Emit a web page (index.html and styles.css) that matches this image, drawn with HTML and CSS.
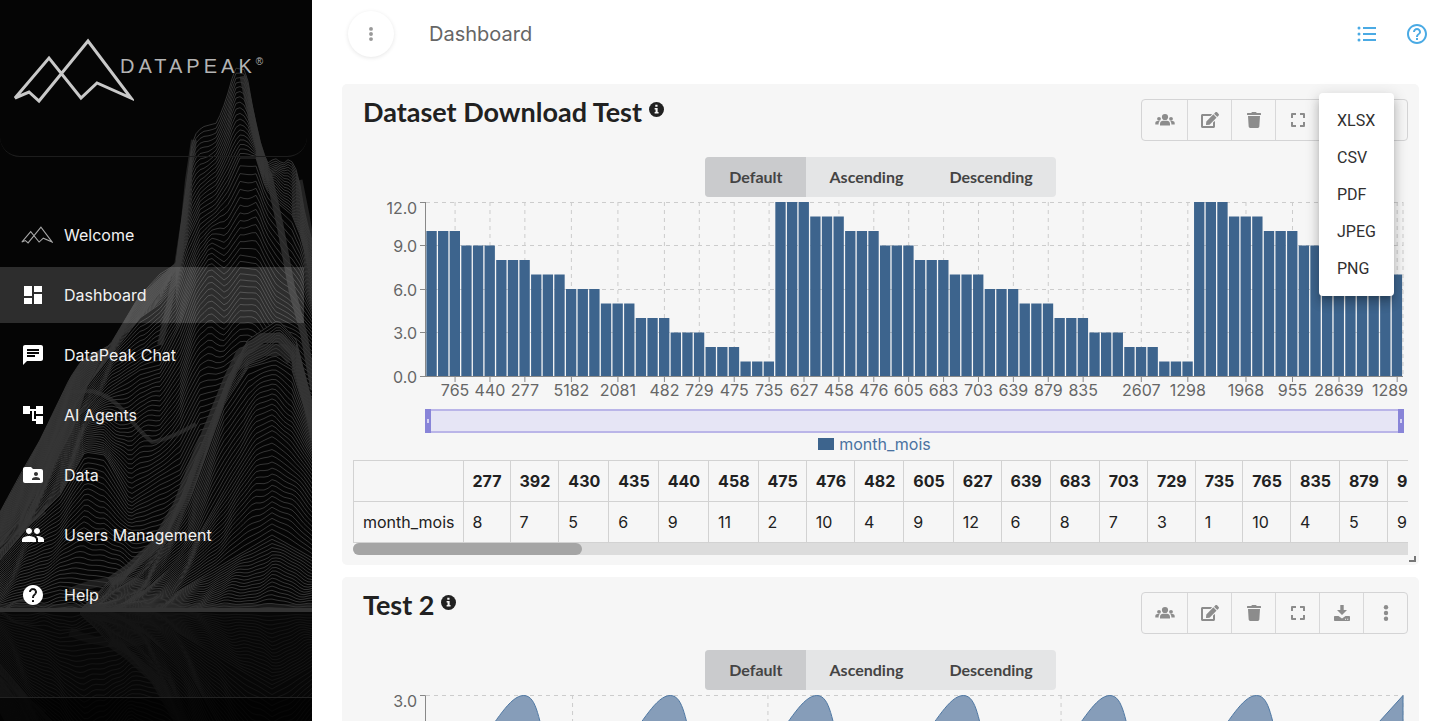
FILE: index.html
```html
<!DOCTYPE html>
<html lang="en">
<head>
<meta charset="utf-8">
<title>Dashboard</title>
<link rel="stylesheet" href="styles.css">
</head>
<body>
<svg class="defs" aria-hidden="true">
  <symbol id="i-info" viewBox="0 0 16 16"><circle cx="8" cy="8" r="8" fill="currentColor"/><path fill="#f6f6f6" d="M6.700 3h2.400v2.100H6.700zM6 6.400h3.200v4.200h1v1.600H6v-1.600h1V8H6z"/></symbol>
  <symbol id="i-users" viewBox="0 0 20 16"><g fill="currentColor"><circle cx="10" cy="5" r="3.100"/><circle cx="4" cy="6.800" r="1.900"/><circle cx="16" cy="6.800" r="1.900"/><path d="M5 13.500v-1.700C5 9.800 6.500 8.800 8 8.800h4c1.500 0 3 1 3 3v1.700zM.3 12.500v-1.300c0-1.200.9-2.100 2.100-2.100h2.300c-.8.800-1.100 1.800-1.100 3.400zM19.700 12.500v-1.300c0-1.200-.9-2.100-2.100-2.100h-2.300c.8.800 1.100 1.800 1.100 3.400z"/></g></symbol>
  <symbol id="i-edit" viewBox="0 0 576 512"><path fill="currentColor" d="M402.600 83.200l90.200 90.200c3.800 3.800 3.800 10 0 13.800L274.400 405.600l-92.800 10.300c-12.400 1.400-22.900-9.100-21.500-21.500l10.300-92.800L388.800 83.200c3.800-3.800 10-3.800 13.800 0zm162-22.900l-48.800-48.800c-15.200-15.200-39.900-15.200-55.200 0l-35.400 35.400c-3.800 3.800-3.800 10 0 13.800l90.200 90.200c3.800 3.800 10 3.800 13.800 0l35.400-35.400c15.200-15.300 15.200-40 0-55.200zM384 346.200V448H64V128h229.800c3.200 0 6.200-1.300 8.500-3.500l40-40c7.600-7.600 2.200-20.500-8.500-20.500H48C21.500 64 0 85.500 0 112v352c0 26.500 21.500 48 48 48h352c26.500 0 48-21.500 48-48V306.200c0-10.700-12.900-16-20.500-8.500l-40 40c-2.200 2.300-3.500 5.300-3.500 8.500z"/></symbol>
  <symbol id="i-trash" viewBox="0 0 448 512"><path fill="currentColor" d="M432 32H312l-9.400-18.700A24 24 0 0 0 281.100 0H166.800a23.720 23.720 0 0 0-21.400 13.300L136 32H16A16 16 0 0 0 0 48v32a16 16 0 0 0 16 16h416a16 16 0 0 0 16-16V48a16 16 0 0 0-16-16zM53.200 467a48 48 0 0 0 47.900 45h245.800a48 48 0 0 0 47.900-45L416 128H32z"/></symbol>
  <symbol id="i-expand" viewBox="0 0 16 16"><path fill="none" stroke="currentColor" stroke-width="2" stroke-linejoin="round" d="M2 6V2h4M10 2h4v4M14 10v4h-4M6 14H2v-4"/></symbol>
  <symbol id="i-download" viewBox="0 0 16 16"><path fill="currentColor" d="M6.300 0h3.400v5h3.300L8 10 3 5h3.300zM.8 11h3.700L8 13.400 11.500 11h3.700c.5 0 .8.300.8.800v3.400c0 .5-.3.800-.8.800H.8c-.5 0-.8-.3-.8-.8v-3.400c0-.5.3-.8.800-.8zM11 14.800h1v-1h-1zm2.200 0h1v-1h-1z"/></symbol>
  <symbol id="i-dots" viewBox="0 0 16 16"><g fill="currentColor"><circle cx="8" cy="2.200" r="2.200"/><circle cx="8" cy="8" r="2.200"/><circle cx="8" cy="13.800" r="2.200"/></g></symbol>
</svg>

<div class="app">
  <aside class="sidebar">
    <svg class="scenery" id="scenery" aria-hidden="true"></svg>
    <div class="brand">
      <svg class="brand-mark" viewBox="0 0 122 66" aria-hidden="true"><path d="M3 60 37 20 69 60 85 45 119 60 76 3 27 63 17 54z"/></svg>
      <span class="brand-name">DATAPEAK<sup>®</sup></span>
    </div>
    <nav class="nav">
      <a href="#"><svg class="peak" viewBox="0 0 122 66"><path d="M3 60 37 20 69 60 85 45 119 60 76 3 27 63 17 54z"/></svg>Welcome</a>
      <a href="#" class="active" aria-current="page"><svg viewBox="0 0 24 24"><path d="M3 13h8V3H3v10zm0 8h8v-6H3v6zm10 0h8V11h-8v10zm0-18v6h8V3h-8z"/></svg>Dashboard</a>
      <a href="#"><svg viewBox="0 0 24 24"><path d="M20 2H4c-1.100 0-1.990.9-1.990 2L2 22l4-4h14c1.100 0 2-.9 2-2V4c0-1.100-.9-2-2-2zM6 9h12v2H6V9zm8 5H6v-2h8v2zm4-6H6V6h12v2z"/></svg>DataPeak Chat</a>
      <a href="#"><svg viewBox="0 0 24 24"><path d="M22 11V3h-7v3H9V3H2v8h7V8h2v10h4v3h7v-8h-7v3h-2V8h2v3h7z"/></svg>AI Agents</a>
      <a href="#"><svg viewBox="0 0 24 24"><path d="M20 6h-8l-2-2H4c-1.100 0-1.990.9-1.990 2L2 18c0 1.100.9 2 2 2h16c1.100 0 2-.9 2-2V8c0-1.100-.9-2-2-2zm-5 3c1.100 0 2 .9 2 2s-.9 2-2 2-2-.9-2-2 .9-2 2-2zm4 8h-8v-1c0-1.330 2.670-2 4-2s4 .67 4 2v1z"/></svg>Data</a>
      <a href="#"><svg viewBox="0 0 24 24"><path d="M16 11c1.660 0 2.990-1.340 2.990-3S17.660 5 16 5c-1.660 0-3 1.340-3 3s1.340 3 3 3zm-8 0c1.660 0 2.990-1.340 2.990-3S9.660 5 8 5C6.340 5 5 6.340 5 8s1.340 3 3 3zm0 2c-2.330 0-7 1.170-7 3.500V19h14v-2.500c0-2.330-4.670-3.500-7-3.500zm8 0c-.29 0-.62.02-.97.05 1.160.84 1.970 1.970 1.970 3.450V19h6v-2.500c0-2.330-4.670-3.500-7-3.500z"/></svg>Users Management</a>
      <a href="#"><svg viewBox="0 0 24 24"><path d="M12 2C6.480 2 2 6.480 2 12s4.480 10 10 10 10-4.480 10-10S17.520 2 12 2zm1 17h-2v-2h2v2zm2.070-7.750l-.9.920C13.450 12.900 13 13.500 13 15h-2v-.5c0-1.100.45-2.100 1.170-2.830l1.240-1.260c.37-.36.59-.86.59-1.410 0-1.100-.9-2-2-2s-2 .9-2 2H8c0-2.210 1.790-4 4-4s4 1.790 4 4c0 .88-.36 1.680-.93 2.250z"/></svg>Help</a>
    </nav>
    <div class="sidebar-foot"></div>
  </aside>

  <main class="main">
    <header class="topbar">
      <button class="round" aria-label="Toggle menu"><svg viewBox="0 0 16 16"><use href="#i-dots"/></svg></button>
      <h1>Dashboard</h1>
      <button class="plain" aria-label="List"><svg viewBox="0 0 20 16"><path d="M6 2h13M6 8h13M6 14h13" stroke="currentColor" stroke-width="2"/><g fill="currentColor"><circle cx="2" cy="2" r="1.500"/><circle cx="2" cy="8" r="1.500"/><circle cx="2" cy="14" r="1.500"/></g></svg></button>
      <button class="plain" aria-label="Help"><svg viewBox="2 2 20 20"><path fill="currentColor" d="M11 18h2v-2h-2v2zm1-16C6.480 2 2 6.480 2 12s4.480 10 10 10 10-4.480 10-10S17.520 2 12 2zm0 18c-4.410 0-8-3.590-8-8s3.590-8 8-8 8 3.590 8 8-3.590 8-8 8zm0-14c-2.210 0-4 1.790-4 4h2c0-1.100.9-2 2-2s2 .9 2 2c0 2-3 1.750-3 5h2c0-2.250 3-2.500 3-5 0-2.210-1.790-4-4-4z"/></svg></button>
    </header>

    <section class="card">
      <div class="card-head">
        <h2>Dataset Download Test <svg class="info"><use href="#i-info"/></svg></h2>
        <div class="toolbar">
          <button aria-label="Share"><svg class="wide"><use href="#i-users"/></svg></button>
          <button aria-label="Edit"><svg class="wide"><use href="#i-edit"/></svg></button>
          <button aria-label="Delete"><svg><use href="#i-trash"/></svg></button>
          <button aria-label="Full screen"><svg><use href="#i-expand"/></svg></button>
          <button aria-label="Download"><svg><use href="#i-download"/></svg></button>
          <button aria-label="More"><svg><use href="#i-dots"/></svg></button>
          <div class="menu" role="menu">
            <button role="menuitem">XLSX</button>
            <button role="menuitem">CSV</button>
            <button role="menuitem">PDF</button>
            <button role="menuitem">JPEG</button>
            <button role="menuitem">PNG</button>
          </div>
        </div>
      </div>
      <div class="sort"><button class="on">Default</button><button>Ascending</button><button>Descending</button></div>
      <svg class="chart" id="bars" role="img" aria-label="Bar chart of month_mois"></svg>
      <div class="legend"><span class="swatch"></span>month_mois</div>
      <div class="table-wrap">
        <table><thead><tr id="head"><td></td></tr></thead><tbody><tr id="vals"><th scope="row">month_mois</th></tr></tbody></table>
      </div>
      <div class="scroll"><div class="thumb"></div></div>
      <span class="grip"></span>
    </section>

    <section class="card">
      <div class="card-head">
        <h2>Test 2 <svg class="info"><use href="#i-info"/></svg></h2>
        <div class="toolbar">
          <button aria-label="Share"><svg class="wide"><use href="#i-users"/></svg></button>
          <button aria-label="Edit"><svg class="wide"><use href="#i-edit"/></svg></button>
          <button aria-label="Delete"><svg><use href="#i-trash"/></svg></button>
          <button aria-label="Full screen"><svg><use href="#i-expand"/></svg></button>
          <button aria-label="Download"><svg><use href="#i-download"/></svg></button>
          <button aria-label="More"><svg><use href="#i-dots"/></svg></button>
        </div>
      </div>
      <div class="sort"><button class="on">Default</button><button>Ascending</button><button>Descending</button></div>
      <svg class="chart" id="area" role="img" aria-label="Area chart"></svg>
    </section>
  </main>
</div>
<script src="app.js"></script>
</body>
</html>
```
FILE: styles.css
```css
* { box-sizing: border-box; }
body { margin: 0; background: #fff; font-family: Inter, "Liberation Sans", sans-serif; font-size: 16px; color: #212121; }
button { font: inherit; color: inherit; border: 0; background: none; padding: 0; cursor: pointer; }
.defs { position: absolute; width: 0; height: 0; }
.app { display: flex; height: 100vh; overflow: hidden; }

.sidebar { position: relative; flex: 0 0 312px; display: flex; flex-direction: column; background: #050505; color: #fff; overflow: hidden; }
.scenery { position: absolute; top: 0; left: 0; width: 100%; height: 100%; }
.brand { position: relative; display: flex; align-items: flex-start; height: 157px; margin-right: 5px; padding: 38px 0 0 12px; border-bottom: 1px solid #1d1d1d; border-radius: 0 0 20px 20px; }
.brand-mark { width: 122px; height: 66px; flex: none; margin-right: -14px; }
.brand-mark path { fill: none; stroke: #c9c9c9; stroke-width: 3; }
.brand-name { padding-top: 16px; font-family: "Liberation Sans", Arial, sans-serif; font-size: 20px; line-height: 24px; letter-spacing: 4px; color: #b4b4b4; white-space: nowrap; }
.brand-name sup { font-size: 10px; line-height: 0; letter-spacing: 0; }
.nav { position: relative; display: flex; flex-direction: column; gap: 4px; padding-top: 50px; margin-right: 8px; }
.nav a { display: flex; align-items: center; gap: 19px; padding: 16px 21px; line-height: 24px; color: #f2f2f2; text-decoration: none; }
.nav a.active { background: rgba(255, 255, 255, .16); }
.nav svg { width: 24px; height: 24px; fill: #fff; }
.nav svg.peak { width: 32px; height: 18px; margin-right: -8px; fill: none; stroke: #a8a8a8; stroke-width: 4; }
.sidebar-foot { position: relative; height: 24px; margin-top: auto; border-top: 1px solid #222; background: rgba(0, 0, 0, .6); }

.main { flex: 1; min-width: 0; padding: 0 20px 0 30px; }
.topbar { display: flex; align-items: center; height: 84px; padding: 0 0 16px 6px; margin-right: -8px; color: #4aaae4; }
.round { width: 46px; height: 46px; border-radius: 50%; background: #fff; color: #999; box-shadow: 0 1px 4px rgba(0, 0, 0, .1); display: grid; place-items: center; }
.round svg { width: 14px; height: 14px; }
h1 { flex: 1; margin: 0 0 0 35px; font-size: 20px; font-weight: 400; line-height: 28px; color: #666; }
.plain { display: flex; margin-left: 30px; }
.plain svg { width: 20px; height: 20px; }

.card { position: relative; background: #f6f6f6; border-radius: 5px; padding: 15px 11px 10px; margin-bottom: 12px; }
.card-head { display: flex; justify-content: space-between; align-items: flex-start; height: 58px; }
h2 { margin: 0 0 0 10px; font-family: Lato, sans-serif; font-size: 27px; font-weight: 700; line-height: 26px; white-space: nowrap; }
.info { width: 15px; height: 15px; vertical-align: 5px; }
.toolbar { position: relative; display: flex; height: 42px; border: 1px solid #d4d4d5; border-radius: 4px; color: #8c8c8c; }
.toolbar > button { width: 44px; display: grid; place-items: center; }
.toolbar > button + button { border-left: 1px solid #d8d8d9; }
.toolbar > button:first-child { width: 45px; }
.toolbar svg { width: 16px; height: 16px; }
.toolbar svg.wide { width: 20px; }
.menu { position: absolute; top: -7px; right: 13px; width: 75px; padding: 9px 0; border-radius: 4px; background: #fff; color: #303030; box-shadow: 0 5px 5px -3px rgba(0, 0, 0, .2), 0 8px 10px 1px rgba(0, 0, 0, .14), 0 3px 14px 2px rgba(0, 0, 0, .12); }
.menu button { display: block; width: 100%; padding: 0 18px; font-family: Roboto, sans-serif; font-size: 16px; line-height: 37px; text-align: left; }
.sort { display: flex; width: max-content; margin: 0 auto; border-radius: 4px; overflow: hidden; background: #e4e5e6; color: #444; }
.sort button { padding: 0 23px; font-family: Lato, sans-serif; font-weight: 700; font-size: 16px; line-height: 40px; }
.sort .on { background: #cacbcd; padding: 0 24px; }

.chart { display: block; width: 100%; height: 236px; overflow: visible; }
.chart text { font-family: Inter, sans-serif; font-size: 16px; fill: #666; }
.grid { stroke: #ccc; stroke-dasharray: 4 4; }
.axis { stroke: #888; stroke-width: 1; fill: none; }
.bar { fill: #3d648d; }
.brush { fill: #e6e5f5; stroke: #bab5e8; stroke-width: 2; }
.handle { fill: #8884d8; }
.nub { fill: #d5d3f3; }
.wave { fill: #869db9; stroke: #4f78a3; }
.legend { display: flex; justify-content: center; align-items: center; gap: 5px; margin-right: 12px; line-height: 22px; color: #4a72a0; }
.swatch { width: 16px; height: 12px; background: #3d648d; }

.table-wrap { margin-top: 5px; overflow: hidden; }
table { border-collapse: collapse; white-space: nowrap; }
th, td { height: 41px; padding: 0 8px 0 9px; border: 1px solid #d2d2d2; text-align: left; font-weight: 400; }
thead th { font-weight: 700; }
.scroll { height: 12px; background: #dcdcdc; border-radius: 6px 0 0 6px; }
.thumb { width: 229px; height: 12px; border-radius: 6px; background: #a5a5a5; }
.grip { position: absolute; right: 3px; bottom: 3px; width: 7px; height: 6px; border: solid #777; border-width: 0 2px 2px 0; }
```
FILE: app.js
```js
const el = (name, attrs, text) => {
  const node = document.createElementNS('http://www.w3.org/2000/svg', name);
  for (const key in attrs) node.setAttribute(key, attrs[key]);
  if (text !== undefined) node.textContent = text;
  return node;
};

const columns = [[277, 8], [392, 7], [430, 5], [435, 6], [440, 9], [458, 11], [475, 2], [476, 10], [482, 4], [605, 9], [627, 12], [639, 6], [683, 8], [703, 7], [729, 3], [735, 1], [765, 10], [835, 4], [879, 5], [955, 9]];
for (const [id, value] of columns) {
  const th = document.createElement('th');
  th.scope = 'col';
  th.textContent = id;
  document.getElementById('head').append(th);
  const td = document.createElement('td');
  td.textContent = value;
  document.getElementById('vals').append(td);
}

const LEFT = 73, TOP = 5;

function drawBars() {
  const svg = document.getElementById('bars');
  const right = svg.clientWidth - 5, span = right - LEFT, height = 174;
  svg.replaceChildren();
  const add = (...a) => svg.append(el(...a));
  const values = [];
  const run = (from, to) => { for (let v = from; v >= to; v--) values.push(v, v, v); };
  run(10, 1); run(12, 1); run(12, 7);
  const step = span / values.length;
  const ticks = { 2: 765, 5: 440, 8: 277, 12: 5182, 16: 2081, 20: 482, 23: 729, 26: 475, 29: 735, 32: 627, 35: 458, 38: 476, 41: 605, 44: 683, 47: 703, 50: 639, 53: 879, 56: 835, 61: 2607, 65: 1298, 70: 1968, 74: 955, 78: 28639, 83: 1289 };
  const bottom = TOP + height;
  for (let v = 0; v <= 12; v += 3) {
    const y = Math.floor(bottom - v * height / 12) + 0.5;
    add('line', { class: 'grid', x1: LEFT, x2: right, y1: y, y2: y });
    add('line', { class: 'axis', x1: LEFT - 6, x2: LEFT, y1: y, y2: y });
    add('text', { x: LEFT - 9, y: v === 12 ? y + 11 : y + 6, 'text-anchor': 'end' }, v.toFixed(1));
  }
  for (const i in ticks) {
    const x = LEFT + (+i + 0.5) * step;
    add('line', { class: 'grid', x1: x, x2: x, y1: TOP, y2: bottom });
    add('line', { class: 'axis', x1: x, x2: x, y1: bottom, y2: bottom + 6 });
    add('text', { x: Math.min(x, right - 13), y: bottom + 20, 'text-anchor': 'middle' }, ticks[i]);
  }
  add('line', { class: 'grid', x1: right, x2: right, y1: TOP, y2: bottom });
  values.forEach((v, i) => add('rect', { class: 'bar', x: LEFT + i * step + 0.4, y: bottom - v * height / 12, width: step - 1.300, height: v * height / 12 }));
  add('path', { class: 'axis', d: `M${LEFT - 0.5} ${TOP}V${bottom + 0.5}H${right}` });
  add('rect', { class: 'brush', x: LEFT, y: 213, width: span, height: 22 });
  for (const x of [LEFT - 1, right - 5]) {
    add('rect', { class: 'handle', x, y: 212, width: 6, height: 24 });
    add('rect', { class: 'nub', x: x + 2, y: 222, width: 2, height: 4 });
  }
}

function drawArea() {
  const svg = document.getElementById('area');
  const right = svg.clientWidth - 5, span = right - LEFT, period = span * 0.15;
  svg.replaceChildren();
  const add = (...a) => svg.append(el(...a));
  add('line', { class: 'grid', x1: LEFT, x2: right, y1: 5.5, y2: 5.5 });
  for (const f of [0.15, 0.35, 0.65, 1]) add('line', { class: 'grid', x1: LEFT + f * span, x2: LEFT + f * span, y1: 5, y2: 200 });
  add('path', { class: 'axis', d: `M${LEFT - 6} 5.5H${LEFT - 0.5}V200` });
  add('text', { x: LEFT - 9, y: 17, 'text-anchor': 'end' }, '3.0');
  for (let k = 0; k < 6; k++) {
    const x = LEFT + span * 0.1 + k * period;
    add('path', { class: 'wave', d: `M${x - 45} 54C${x - 28} 33 ${x - 14} 5.500 ${x} 5.500S${x + 15} 33 ${x + 24} 60Z` });
  }
  add('path', { class: 'wave', d: `M${right} 5.500L${right - 24} 32L${right - 40} 54H${right}Z` });
}

/* Each key is a ridge profile; the contours between two keys are blended. */
function drawScenery() {
  const svg = document.getElementById('scenery');
  const sample = (pts, x) => {
    let i = 1;
    while (i < pts.length - 1 && pts[i][0] < x) i++;
    const [a, b] = [pts[i - 1], pts[i]];
    return a[1] + (b[1] - a[1]) * (x - a[0]) / (b[0] - a[0]);
  };
  const range = (keys, counts, group) => {
    const from = keys[0][0][0];
    keys.slice(1).forEach((next, k) => {
      for (let n = 0; n < counts[k]; n++) {
        const t = n / counts[k];
        let d = '';
        for (let x = from; x <= 316; x += 4) {
          const base = sample(keys[k], x) * (1 - t) + sample(next, x) * t;
          const wave = (Math.sin(x / 8 + k * 2 + n / 7) * 3 + Math.sin(x / 3.300 + n / 3)) * Math.sin(Math.PI * t);
          d += (d ? 'L' : 'M') + x + ' ' + Math.min(612, base + wave).toFixed(1);
        }
        group.append(el('path', { d: d + 'L320 640L' + (from - 4) + ' 640', fill: '#050505', stroke: '#3b3b3b', 'stroke-width': 0.9 }));
      }
    });
  };
  const slope = (group, d, width, opacity) => group.append(el('path', { d, fill: 'none', stroke: '#363636', 'stroke-width': width, 'stroke-linejoin': 'round', opacity }));
  const back = [
    [[0, 512], [20, 475], [40, 440], [70, 378], [82, 360], [110, 345], [138, 298], [160, 274], [176, 264], [183, 210], [193, 137], [202, 127], [217, 123], [226, 100], [235, 68], [246, 70], [254, 115], [262, 150], [268, 163], [275, 158], [283, 164], [290, 158], [298, 173], [305, 215], [316, 255]],
    [[0, 540], [20, 520], [50, 450], [78, 398], [115, 350], [140, 318], [160, 304], [176, 285], [186, 244], [200, 214], [215, 205], [228, 185], [240, 158], [256, 158], [266, 190], [280, 205], [292, 215], [302, 240], [316, 310]],
    [[0, 550], [20, 530], [50, 470], [80, 415], [110, 390], [140, 370], [160, 365], [180, 325], [195, 285], [210, 262], [225, 275], [240, 255], [258, 258], [275, 290], [290, 300], [316, 330]],
    [[0, 560], [30, 525], [60, 495], [85, 452], [105, 455], [130, 500], [160, 480], [180, 470], [200, 430], [240, 420], [316, 420]],
    [[0, 605], [60, 590], [110, 600], [170, 600], [316, 600]],
    [[0, 612], [316, 612]]
  ];
  const front = [
    [[80, 612], [110, 580], [130, 568], [155, 540], [180, 500], [196, 458], [210, 425], [228, 378], [248, 340], [278, 320], [296, 340], [316, 420]],
    [[80, 612], [145, 572], [170, 540], [190, 500], [208, 450], [224, 405], [248, 368], [275, 360], [292, 370], [316, 445]],
    [[80, 612], [145, 590], [190, 550], [230, 480], [255, 440], [273, 430], [290, 445], [316, 480]],
    [[80, 612], [170, 596], [230, 560], [272, 535], [316, 560]],
    [[80, 612], [316, 612]]
  ];
  svg.append(el('clipPath', { id: 'shore' }));
  svg.lastChild.append(el('rect', { x: 0, y: 0, width: 320, height: 612 }));
  const land = el('g', { id: 'land', 'clip-path': 'url(#shore)' });
  range(back, [18, 13, 26, 26, 6], land);
  land.append(el('path', { d: 'M0 512L40 440L70 378L82 360L110 345L138 298L176 262L170 280L135 325L105 350L88 385L72 432L45 480L20 520L0 545Z', fill: '#363636', opacity: 0.8 }));
  slope(land, 'M194 140L188 180L184 220L177 266L168 310L160 345', 6, 0.6);
  slope(land, 'M243 76L250 110L258 145L270 180L280 225L292 290L304 335L314 390', 7, 0.75);
  slope(land, 'M300 180L307 215L313 250', 5, 0.6);
  slope(land, 'M70 392L92 391Q112 396 126 414T152 442Q168 440 196 424', 4, 0.6);
  slope(land, 'M0 545L30 522L45 512', 4, 0.5);
  range(front, [12, 14, 18, 20], land);
  slope(land, 'M110 582L130 568L155 545L178 505L196 458L210 425L228 380L240 355L262 338L280 338L294 352L306 395L316 440', 10, 0.7);
  slope(land, 'M236 365L262 350L284 350L292 360', 12, 0.5);
  slope(land, 'M70 592Q110 574 150 585', 8, 0.5);
  svg.append(land);
  svg.append(el('rect', { x: 0, y: 604, width: 320, height: 5, fill: '#303030', opacity: 0.5 }));
  svg.append(el('rect', { x: 0, y: 608, width: 320, height: 4, fill: '#333' }));
  svg.append(el('rect', { x: 0, y: 612, width: 320, height: 400, fill: '#090909' }));
  const mirror = el('g', { transform: 'translate(0 1224) scale(1 -1)', opacity: 0.25 });
  mirror.append(el('use', { href: '#land' }));
  svg.append(mirror);
}

const draw = () => { drawBars(); drawArea(); };
drawScenery();
draw();
addEventListener('resize', draw);
```
